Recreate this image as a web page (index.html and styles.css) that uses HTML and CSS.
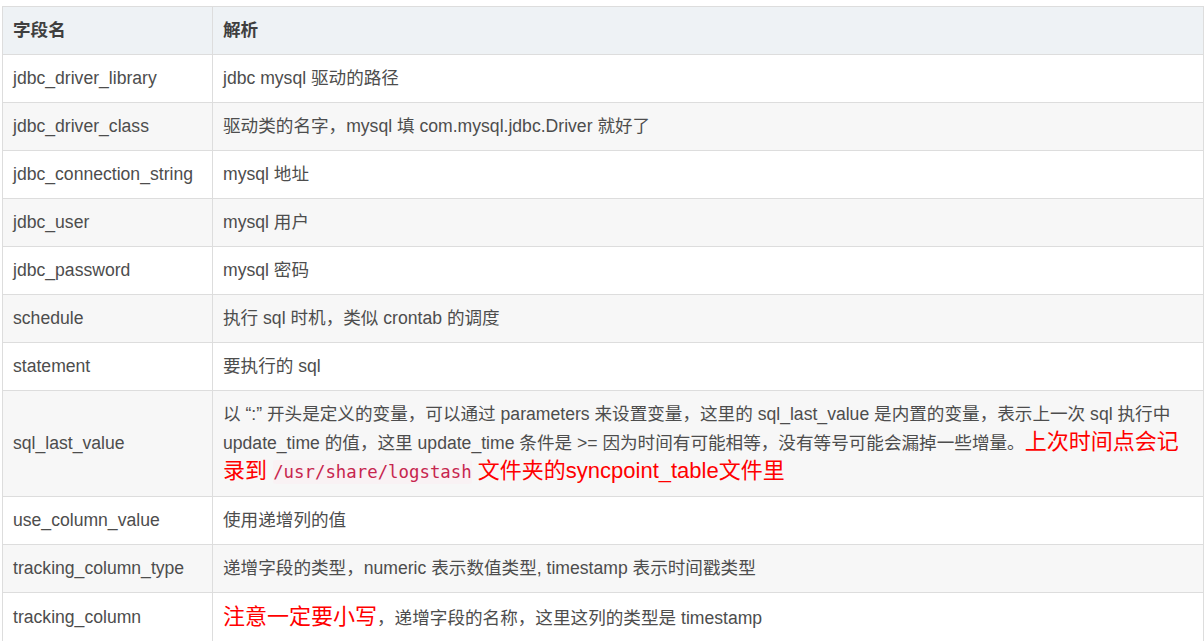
FILE: index.html
```html
<!DOCTYPE html>
<html lang="zh-CN">
<head>
    <meta charset="UTF-8">
    <meta name="viewport" content="width=device-width, initial-scale=1.0">
    <title>jdbc 参数说明</title>
    <link rel="stylesheet" href="styles.css">
</head>
<body>
    <table class="params">
        <thead>
            <tr>
                <th class="col-name">字段名</th>
                <th>解析</th>
            </tr>
        </thead>
        <tbody>
            <tr>
                <td>jdbc_driver_library</td>
                <td>jdbc mysql 驱动的路径</td>
            </tr>
            <tr>
                <td>jdbc_driver_class</td>
                <td>驱动类的名字，mysql 填 com.mysql.jdbc.Driver 就好了</td>
            </tr>
            <tr>
                <td>jdbc_connection_string</td>
                <td>mysql 地址</td>
            </tr>
            <tr>
                <td>jdbc_user</td>
                <td>mysql 用户</td>
            </tr>
            <tr>
                <td>jdbc_password</td>
                <td>mysql 密码</td>
            </tr>
            <tr>
                <td>schedule</td>
                <td>执行 sql 时机，类似 crontab 的调度</td>
            </tr>
            <tr>
                <td>statement</td>
                <td>要执行的 sql</td>
            </tr>
            <tr>
                <td>sql_last_value</td>
                <td>以 “:” 开头是定义的变量，可以通过 parameters 来设置变量，这里的 sql_last_value 是内置的变量，表示上一次 sql 执行中 update_time 的值，这里 update_time 条件是 &gt;= 因为时间有可能相等，没有等号可能会漏掉一些增量。<span class="note">上次时间点会记录到 <code>/usr/share/logstash</code> 文件夹的syncpoint_table文件里</span></td>
            </tr>
            <tr>
                <td>use_column_value</td>
                <td>使用递增列的值</td>
            </tr>
            <tr>
                <td>tracking_column_type</td>
                <td>递增字段的类型，numeric 表示数值类型, timestamp 表示时间戳类型</td>
            </tr>
            <tr>
                <td>tracking_column</td>
                <td><span class="note">注意一定要小写</span>，递增字段的名称，这里这列的类型是 timestamp</td>
            </tr>
        </tbody>
    </table>
</body>
</html>
```

FILE: styles.css
```css
body {
    margin: 0;
    padding: 6px 0 0 2px;
    font-family: "Liberation Sans", Arial, "Noto Sans CJK SC", sans-serif;
    font-size: 17.6px;
    color: #4d4d4d;
    background: #fff;
}
.params {
    width: 1202px;
    border-collapse: collapse;
    line-height: 27px;
}
.params th,
.params td {
    border: 1px solid #dddddd;
    padding: 10px 10px;
    text-align: left;
    vertical-align: middle;
}
.params th {
    background-color: #eef2f5;
    color: #3f3f3f;
    font-weight: bold;
}
.params .col-name {
    width: 189px;
}
.params tbody tr:nth-child(even) {
    background-color: #f7f7f7;
}
.note {
    color: #ff0000;
    font-size: 22px;
}
code {
    font-family: "DejaVu Sans Mono", "Liberation Mono", monospace;
    font-size: 0.79em;
    color: #c7254e;
    background-color: #f9f2f4;
    padding: 2px 0;
    border-radius: 3px;
}
```
